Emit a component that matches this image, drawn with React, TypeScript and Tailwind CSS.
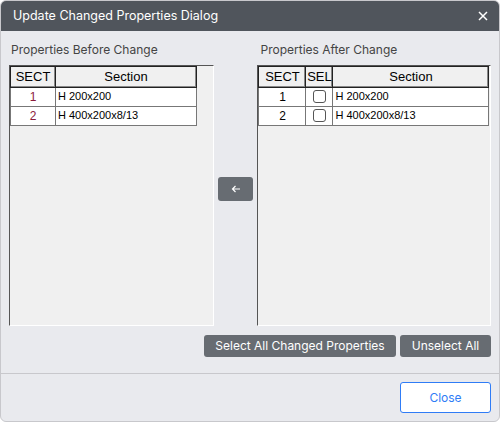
export default function App() {
  const font = { fontFamily: 'Inter, "Noto Sans", sans-serif' };
  const tfont = { fontFamily: '"Liberation Sans", Arial, sans-serif' };
  const th = "border border-[#222] bg-[#f0f0f0] text-center text-[13px] font-normal h-[19px] p-0 shadow-[inset_-1px_-1px_0_#888]";
  const td = "border border-[#777] bg-white text-[11px] h-[18px] p-0";
  return (
    <div className="w-[500px] h-[422px] bg-white" style={font}>
      <div className="w-[500px] h-[422px] bg-[#e9eaee] rounded-[6px] border border-[#c8c8cc] overflow-hidden flex flex-col">
        <div className="h-[30px] bg-[#50555c] text-white text-[12.5px] flex items-center justify-between pl-[12px] pr-[10px] shrink-0">
          <span>Update Changed Properties Dialog</span>
          <svg width="12" height="12" viewBox="0 0 12 12"><path d="M2 2L10 10M10 2L2 10" stroke="white" strokeWidth="1.5"/></svg>
        </div>
        <div className="flex px-[8px] pt-[11px] gap-[4px]">
          <div className="w-[206px] flex flex-col">
            <div className="text-[12px] text-[#444] h-[16px] pl-[2px] leading-[16px]">Properties Before Change</div>
            <div className="mt-[7px] h-[261px] bg-[#f0f0f0] border border-[#999] border-t-[#555] border-l-[#555] border-r-white border-b-white p-0" style={tfont}>
              <table className="border-collapse" style={{ width: 187 }}>
                <thead><tr><th className={th + " w-[45px]"}>SECT</th><th className={th}>Section</th></tr></thead>
                <tbody>
                  <tr><td className={td + " text-center text-[12px] text-[#8b1a3a]"}>1</td><td className={td + " pl-[2px]"}>H 200x200</td></tr>
                  <tr><td className={td + " text-center text-[12px] text-[#8b1a3a]"}>2</td><td className={td + " pl-[2px]"}>H 400x200x8/13</td></tr>
                </tbody>
              </table>
            </div>
          </div>
          <div className="w-[36px] flex items-center justify-center pt-[10px]">
            <div className="w-[35px] h-[24px] bg-[#676c72] rounded-[3px] flex items-center justify-center">
              <svg width="10" height="10" viewBox="0 0 10 10"><path d="M9 5H1.5M4.5 2L1.5 5L4.5 8" stroke="white" strokeWidth="1.2" fill="none"/></svg>
            </div>
          </div>
          <div className="w-[235px] flex flex-col">
            <div className="text-[12px] text-[#444] h-[16px] pl-[3px] leading-[16px]">Properties After Change</div>
            <div className="mt-[7px] h-[261px] bg-[#f0f0f0] border border-[#999] border-t-[#555] border-l-[#555] border-r-white border-b-white" style={tfont}>
              <table className="border-collapse" style={{ width: 231 }}>
                <thead><tr><th className={th + " w-[47px]"}>SECT</th><th className={th + " w-[27px]"}>SEL</th><th className={th}>Section</th></tr></thead>
                <tbody>
                  {["H 200x200", "H 400x200x8/13"].map((s, i) => (
                    <tr key={i}>
                      <td className={td + " text-center text-[12px]"}>{i + 1}</td>
                      <td className={td}><div className="mx-auto w-[13px] h-[13px] border border-[#555] rounded-[3px] bg-white" /></td>
                      <td className={td + " pl-[2px]"}>{s}</td>
                    </tr>
                  ))}
                </tbody>
              </table>
            </div>
          </div>
        </div>
        <div className="flex justify-end gap-[4px] pr-[8px] mt-[9px]">
          <div className="w-[192px] h-[22px] bg-[#676c72] rounded-[3px] text-white text-[12px] flex items-center justify-center">Select All Changed Properties</div>
          <div className="w-[91px] h-[22px] bg-[#676c72] rounded-[3px] text-white text-[12px] flex items-center justify-center">Unselect All</div>
        </div>
        <div className="mt-[16px] border-t border-[#c8c8cc]" />
        <div className="flex justify-end pr-[8px] mt-[8px]">
          <div className="w-[91px] h-[31px] bg-white border border-[#2f7cf6] rounded-[3px] text-[#2f7cf6] text-[12px] flex items-center justify-center">Close</div>
        </div>
      </div>
    </div>
  );
}
